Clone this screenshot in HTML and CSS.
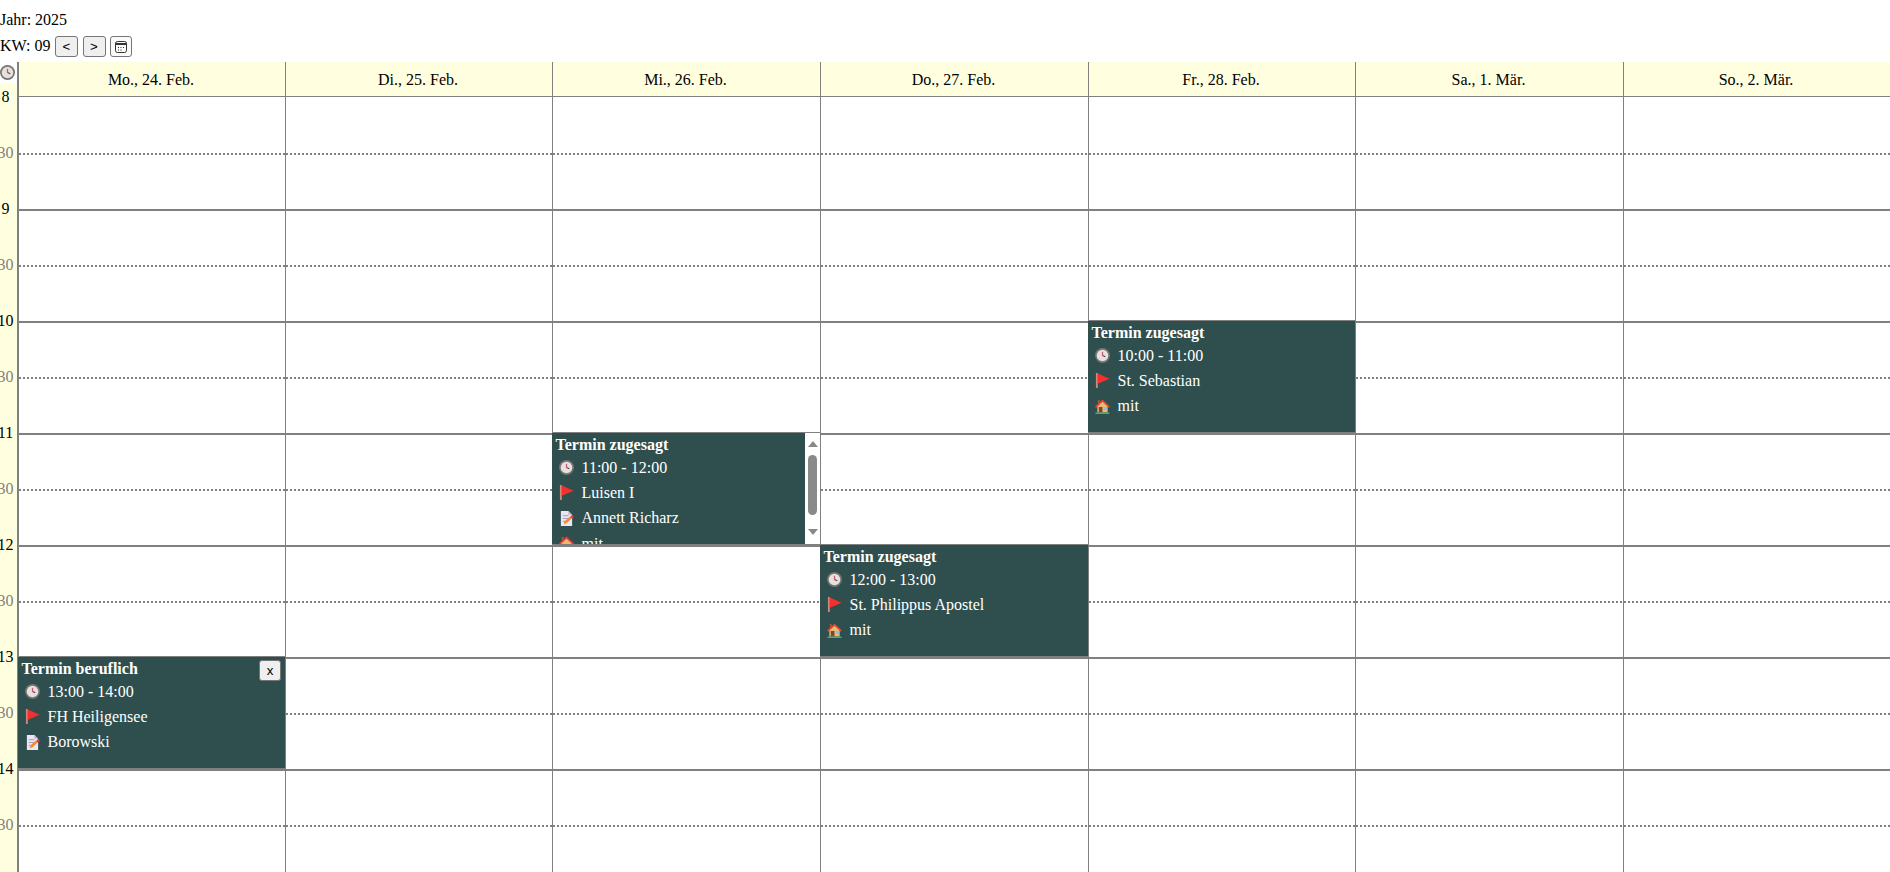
FILE: index.html
```html
<!DOCTYPE html>
<html lang="de">
<head>
    <meta charset="UTF-8">
    <title>Kalender</title>
    <link rel="stylesheet" href="styles.css">
</head>
<body>
    <svg class="defs" width="0" height="0">
        <symbol id="i-clock" viewBox="0 0 16 16">
            <circle cx="8" cy="8" r="8" fill="#777472"/>
            <circle cx="8" cy="8" r="6.200" fill="#e6e1dc"/>
            <path d="M8 4V8" stroke="#d0507a" stroke-width="1.300"/>
            <path d="M8 8L11 9.300" stroke="#444" stroke-width="1.100"/>
        </symbol>
        <symbol id="i-flag" viewBox="0 0 16 16">
            <rect x="1" y="0" width="2" height="16" fill="#c98a78"/>
            <path d="M3 .5L15.500 6L3 11.500Z" fill="#f42f2f"/>
        </symbol>
        <symbol id="i-memo" viewBox="0 0 16 16">
            <path d="M2 0H10L14 4V16H2Z" fill="#ebe6f2"/>
            <path d="M10 0L14 4H10Z" fill="#b9aecb"/>
            <path d="M4 5H10M4 8H11M4 11H7" stroke="#a49ab8" stroke-width="1"/>
            <path d="M5 14L6 11L12 5.500L14 7.500L8 13Z" fill="#f58a2e"/>
            <circle cx="14" cy="6" r="1.600" fill="#ec2f6b"/>
        </symbol>
        <symbol id="i-house" viewBox="0 0 16 16">
            <rect x="3" y="1" width="2" height="4" fill="#a5573a"/>
            <path d="M2.500 7L8 2.500L13.500 7V14.500H2.500Z" fill="#edb877"/>
            <path d="M8 0.500L16 8L14.800 9.300L8 3L1.200 9.300L0 8Z" fill="#e5432f"/>
            <rect x="4" y="8.500" width="4" height="6" fill="#7a4a2c"/>
            <rect x="9.500" y="8.500" width="3" height="3" fill="#7cc4ee"/>
            <rect x="0.500" y="14.500" width="15" height="1.500" fill="#37b678"/>
        </symbol>
    </svg>

    <div class="toolbar">
        <div class="toolbar-year">Jahr: 2025</div>
        <div class="toolbar-week">
            <span class="week-label">KW: 09</span>
            <button class="btn">&lt;</button>
            <button class="btn">&gt;</button>
            <button class="btn btn-cal">
                <svg width="14" height="14" viewBox="0 0 14 14" fill="none" stroke="#333">
                    <rect x="1.500" y="1.500" width="11" height="11" rx="2"/>
                    <path d="M1.500 4H12.500" stroke-width="2"/>
                    <path d="M4 7.500H5M6.500 7.500H7.500M9 7.500H10M4 10H5M6.500 10H7.500"/>
                </svg>
            </button>
        </div>
    </div>

    <div class="calendar" id="calendar">
        <div class="corner"><svg class="icon"><use href="#i-clock"/></svg></div>
        <div class="day">Mo., 24. Feb.</div>
        <div class="day">Di., 25. Feb.</div>
        <div class="day">Mi., 26. Feb.</div>
        <div class="day">Do., 27. Feb.</div>
        <div class="day">Fr., 28. Feb.</div>
        <div class="day">Sa., 1. Mär.</div>
        <div class="day">So., 2. Mär.</div>

        <div class="event ev-fri">
            <div class="event-body">
                <b>Termin zugesagt</b>
                <div class="event-row"><svg class="icon"><use href="#i-clock"/></svg>10:00 - 11:00</div>
                <div class="event-row"><svg class="icon"><use href="#i-flag"/></svg>St. Sebastian</div>
                <div class="event-row"><svg class="icon"><use href="#i-house"/></svg>mit</div>
            </div>
        </div>
        <div class="event ev-wed">
            <div class="event-body">
                <b>Termin zugesagt</b>
                <div class="event-row"><svg class="icon"><use href="#i-clock"/></svg>11:00 - 12:00</div>
                <div class="event-row"><svg class="icon"><use href="#i-flag"/></svg>Luisen I</div>
                <div class="event-row"><svg class="icon"><use href="#i-memo"/></svg>Annett Richarz</div>
                <div class="event-row"><svg class="icon"><use href="#i-house"/></svg>mit</div>
            </div>
            <div class="scrollbar">
                <div class="arrow-up"></div>
                <div class="thumb"></div>
                <div class="arrow-down"></div>
            </div>
        </div>
        <div class="event ev-thu">
            <div class="event-body">
                <b>Termin zugesagt</b>
                <div class="event-row"><svg class="icon"><use href="#i-clock"/></svg>12:00 - 13:00</div>
                <div class="event-row"><svg class="icon"><use href="#i-flag"/></svg>St. Philippus Apostel</div>
                <div class="event-row"><svg class="icon"><use href="#i-house"/></svg>mit</div>
            </div>
        </div>
        <div class="event ev-mon">
            <div class="event-body">
                <button class="btn btn-close">x</button>
                <b>Termin beruflich</b>
                <div class="event-row"><svg class="icon"><use href="#i-clock"/></svg>13:00 - 14:00</div>
                <div class="event-row"><svg class="icon"><use href="#i-flag"/></svg>FH Heiligensee</div>
                <div class="event-row"><svg class="icon"><use href="#i-memo"/></svg>Borowski</div>
            </div>
        </div>
    </div>

    <script src="calendar.js"></script>
</body>
</html>
```
FILE: styles.css
```css
html, body {
    height: 100%;
    overflow: hidden;
}
body {
    margin: 0;
    font-family: "Liberation Serif", serif;
    font-size: 16px;
    color: black;
    background-color: white;
}
.defs {
    display: block;
}
.toolbar {
    height: 62px;
    padding-top: 11px;
    box-sizing: border-box;
}
.toolbar-year {
    height: 25px;
    line-height: 17px;
}
.toolbar-week {
    display: flex;
    align-items: flex-start;
    gap: 4.500px;
    height: 22px;
}
.week-label {
    line-height: 20px;
}
.btn {
    height: 21px;
    width: 23px;
    padding: 0;
    font-family: "Liberation Sans", sans-serif;
    font-size: 13.330px;
    color: black;
    background-color: #efefef;
    border: 1px solid #767676;
    border-radius: 3px;
}
.btn-cal {
    width: 22px;
    background-color: #fafafa;
    display: flex;
    align-items: center;
    justify-content: center;
}
.calendar {
    display: grid;
    grid-template-columns: 18px 267px 267px 268px 268px 267px 268px 1fr;
    grid-template-rows: 35px 58px repeat(13, 56px);
}
.corner {
    grid-column: 1;
    grid-row: 1;
    border-right: 1px solid gray;
}
.corner .icon {
    display: block;
    margin: 3px 0 0 0;
}
.day {
    grid-row: 1;
    background-color: lightyellow;
    border-left: 1px solid gray;
    border-bottom: 1px solid gray;
    padding-right: 2px;
    text-align: center;
    line-height: 35px;
}
.hour {
    display: flex;
    justify-content: center;
    padding-right: 6px;
    margin-top: -10px;
    background-color: lightyellow;
    border-right: 1px solid gray;
    white-space: nowrap;
    line-height: 16px;
}
.hour-first {
    margin-top: -14px;
    padding-top: 6px;
}
.hour-half {
    color: gray;
}
.cell {
    border-left: 1px solid gray;
    border-bottom: 2px solid gray;
}
.cell-half {
    border-bottom: none;
    background: repeating-linear-gradient(to right, gray 0 2.500px, white 2.500px 4px) bottom / 100% 2px no-repeat;
}
.event {
    display: flex;
    z-index: 1;
    margin-top: -3px;
    min-height: 0;
    background-color: darkslategray;
    color: white;
    border-top: 1px solid gray;
    border-bottom: 3px solid gray;
    overflow: hidden;
}
.event-body {
    position: relative;
    flex: 1;
    min-width: 0;
    padding: 3px 3px 0 3.500px;
    overflow: hidden;
}
.event b {
    display: block;
    line-height: 17px;
    margin-bottom: 2px;
}
.event-row {
    display: flex;
    align-items: center;
    height: 25.300px;
}
.icon {
    width: 15px;
    height: 15px;
    flex: none;
    margin: 0 8px 0 3px;
}
.ev-fri { grid-column: 6; grid-row: 6 / span 2; }
.ev-wed { grid-column: 4; grid-row: 8 / span 2; }
.ev-thu { grid-column: 5; grid-row: 10 / span 2; }
.ev-mon { grid-column: 2; grid-row: 12 / span 2; }
.btn-close {
    position: absolute;
    top: 3px;
    right: 4px;
    width: 22px;
}
.scrollbar {
    flex: none;
    width: 15px;
    padding-top: 8px;
    background-color: white;
    display: flex;
    flex-direction: column;
    align-items: center;
}
.thumb {
    width: 9px;
    height: 60px;
    margin: 8px 0 14px;
    border-radius: 5px;
    background-color: #8a8a8a;
}
.arrow-up, .arrow-down {
    width: 0;
    height: 0;
    border-left: 5px solid transparent;
    border-right: 5px solid transparent;
}
.arrow-up {
    border-bottom: 6px solid #8a8a8a;
}
.arrow-down {
    border-top: 6px solid #8a8a8a;
}
```
FILE: calendar.js
```js
// Fills the grid with the half hour rows, events are already in the markup
const calendar = document.getElementById('calendar');
for (let row = 0; row < 14; row++) {
    const half = row % 2 == 1;
    const label = document.createElement('div');
    label.className = half ? 'hour hour-half' : 'hour';
    if (row == 0) label.className += ' hour-first';
    label.textContent = half ? '30' : String(8 + row / 2);
    label.style.gridRow = row + 2;
    label.style.gridColumn = 1;
    calendar.appendChild(label);
    for (let col = 2; col <= 8; col++) {
        const cell = document.createElement('div');
        cell.className = half ? 'cell' : 'cell cell-half';
        cell.style.gridRow = row + 2;
        cell.style.gridColumn = col;
        calendar.appendChild(cell);
    }
}
```
